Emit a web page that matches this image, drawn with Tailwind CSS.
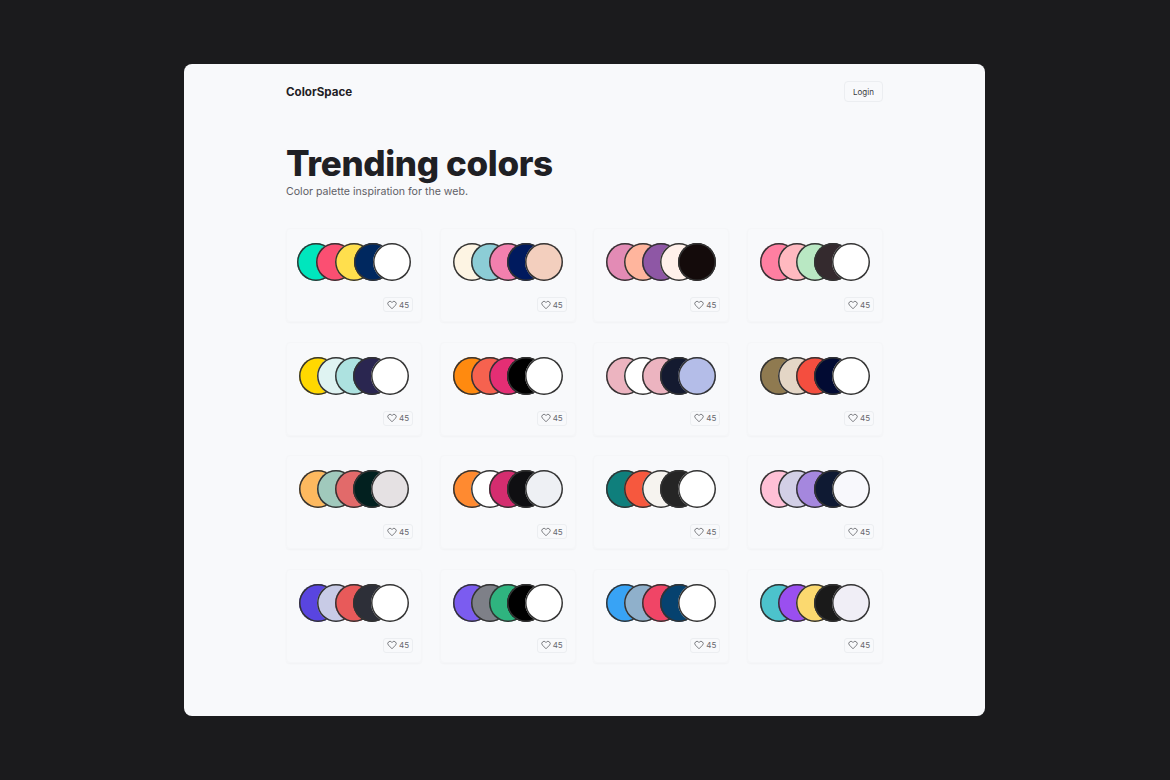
<!DOCTYPE html>
<html lang="en">
<head>
    <meta charset="UTF-8">
    <title>ColorSpace - Trending colors</title>
    <script src="https://cdn.jsdelivr.net/npm/@tailwindcss/browser@4"></script>
</head>
<body class="bg-[#1b1b1d] font-['Inter',sans-serif]">
<div class="min-h-[780px] pt-[64px] pl-[184px]">
    <div class="w-[801px] h-[652px] bg-[#f8f9fb] rounded-lg px-[102px] pt-[17px]">
        <!-- Header -->
        <header class="flex items-center justify-between">
            <span class="pt-[2px] text-[11.6px] font-bold text-[#1f2024]">ColorSpace</span>
            <button class="w-[39px] h-[21px] rounded border border-[#eceef1] text-[8px] text-[#3a3b40]">Login</button>
        </header>

        <h1 class="mt-[41px] text-[35px] leading-[40px] font-extrabold tracking-[-0.35px] text-[#1f2024]">Trending colors</h1>
        <p class="mt-[2px] text-[10.6px] leading-[14px] text-[#5f6066]">Color palette inspiration for the web.</p>

        <!-- Palettes -->
        <div class="mt-[29px] grid grid-cols-4 gap-x-[17.67px] gap-y-[19.5px]">
            <!-- Row 1 -->
            <div class="h-[94px] pt-[14px] px-[8px] rounded border border-[#f5f6f8] shadow-[0_1px_2px_rgba(0,0,0,0.03)]">
                <div class="flex justify-center">
                    <span class="shrink-0 size-[38px] rounded-full shadow-[inset_0_0_0_1.5px_#333] bg-[#00e6bd]"></span>
                    <span class="shrink-0 size-[38px] rounded-full shadow-[inset_0_0_0_1.5px_#333] bg-[#fb4f72] -ml-[19px]"></span>
                    <span class="shrink-0 size-[38px] rounded-full shadow-[inset_0_0_0_1.5px_#333] bg-[#ffdf4d] -ml-[19px]"></span>
                    <span class="shrink-0 size-[38px] rounded-full shadow-[inset_0_0_0_1.5px_#333] bg-[#00285f] -ml-[19px]"></span>
                    <span class="shrink-0 size-[38px] rounded-full shadow-[inset_0_0_0_1.5px_#333] bg-[#fff] -ml-[19px]"></span>
                </div>
                <div class="mt-[16px] flex justify-end">
                    <span class="w-[30px] h-[15px] flex items-center justify-center gap-[2px] rounded-[3px] border border-[#eceef1] text-[8px] text-[#66676d]"><svg class="size-[10px]" viewBox="0 0 24 24" fill="none" stroke="#55565b" stroke-width="1.8"><path d="M12 21 3.5 12.4a5.4 5.4 0 0 1 0-7.6 5.3 5.3 0 0 1 7.6 0l.9.9.9-.9a5.3 5.3 0 0 1 7.6 0 5.4 5.4 0 0 1 0 7.6z"/></svg>45</span>
                </div>
            </div>
            <div class="h-[94px] pt-[14px] px-[8px] rounded border border-[#f5f6f8] shadow-[0_1px_2px_rgba(0,0,0,0.03)]">
                <div class="flex justify-center">
                    <span class="shrink-0 size-[38px] rounded-full shadow-[inset_0_0_0_1.5px_#333] bg-[#fdf4e3]"></span>
                    <span class="shrink-0 size-[38px] rounded-full shadow-[inset_0_0_0_1.5px_#333] bg-[#8ccdd6] -ml-[20px]"></span>
                    <span class="shrink-0 size-[38px] rounded-full shadow-[inset_0_0_0_1.5px_#333] bg-[#f280ae] -ml-[20px]"></span>
                    <span class="shrink-0 size-[38px] rounded-full shadow-[inset_0_0_0_1.5px_#333] bg-[#001a5e] -ml-[20px]"></span>
                    <span class="shrink-0 size-[38px] rounded-full shadow-[inset_0_0_0_1.5px_#333] bg-[#f3cfbe] -ml-[20px]"></span>
                </div>
                <div class="mt-[16px] flex justify-end">
                    <span class="w-[30px] h-[15px] flex items-center justify-center gap-[2px] rounded-[3px] border border-[#eceef1] text-[8px] text-[#66676d]"><svg class="size-[10px]" viewBox="0 0 24 24" fill="none" stroke="#55565b" stroke-width="1.8"><path d="M12 21 3.5 12.4a5.4 5.4 0 0 1 0-7.6 5.3 5.3 0 0 1 7.6 0l.9.9.9-.9a5.3 5.3 0 0 1 7.6 0 5.4 5.4 0 0 1 0 7.6z"/></svg>45</span>
                </div>
            </div>
            <div class="h-[94px] pt-[14px] px-[8px] rounded border border-[#f5f6f8] shadow-[0_1px_2px_rgba(0,0,0,0.03)]">
                <div class="flex justify-center">
                    <span class="shrink-0 size-[38px] rounded-full shadow-[inset_0_0_0_1.5px_#333] bg-[#e38bb5]"></span>
                    <span class="shrink-0 size-[38px] rounded-full shadow-[inset_0_0_0_1.5px_#333] bg-[#ffb59d] -ml-[20px]"></span>
                    <span class="shrink-0 size-[38px] rounded-full shadow-[inset_0_0_0_1.5px_#333] bg-[#8e57a5] -ml-[20px]"></span>
                    <span class="shrink-0 size-[38px] rounded-full shadow-[inset_0_0_0_1.5px_#333] bg-[#fff0ea] -ml-[20px]"></span>
                    <span class="shrink-0 size-[38px] rounded-full shadow-[inset_0_0_0_1.5px_#333] bg-[#140b0b] -ml-[20px]"></span>
                </div>
                <div class="mt-[16px] flex justify-end">
                    <span class="w-[30px] h-[15px] flex items-center justify-center gap-[2px] rounded-[3px] border border-[#eceef1] text-[8px] text-[#66676d]"><svg class="size-[10px]" viewBox="0 0 24 24" fill="none" stroke="#55565b" stroke-width="1.8"><path d="M12 21 3.5 12.4a5.4 5.4 0 0 1 0-7.6 5.3 5.3 0 0 1 7.6 0l.9.9.9-.9a5.3 5.3 0 0 1 7.6 0 5.4 5.4 0 0 1 0 7.6z"/></svg>45</span>
                </div>
            </div>
            <div class="h-[94px] pt-[14px] px-[8px] rounded border border-[#f5f6f8] shadow-[0_1px_2px_rgba(0,0,0,0.03)]">
                <div class="flex justify-center">
                    <span class="shrink-0 size-[38px] rounded-full shadow-[inset_0_0_0_1.5px_#333] bg-[#ff7fa1]"></span>
                    <span class="shrink-0 size-[38px] rounded-full shadow-[inset_0_0_0_1.5px_#333] bg-[#ffb9c0] -ml-[20px]"></span>
                    <span class="shrink-0 size-[38px] rounded-full shadow-[inset_0_0_0_1.5px_#333] bg-[#b9e8c3] -ml-[20px]"></span>
                    <span class="shrink-0 size-[38px] rounded-full shadow-[inset_0_0_0_1.5px_#333] bg-[#342a2e] -ml-[20px]"></span>
                    <span class="shrink-0 size-[38px] rounded-full shadow-[inset_0_0_0_1.5px_#333] bg-[#fff] -ml-[20px]"></span>
                </div>
                <div class="mt-[16px] flex justify-end">
                    <span class="w-[30px] h-[15px] flex items-center justify-center gap-[2px] rounded-[3px] border border-[#eceef1] text-[8px] text-[#66676d]"><svg class="size-[10px]" viewBox="0 0 24 24" fill="none" stroke="#55565b" stroke-width="1.8"><path d="M12 21 3.5 12.4a5.4 5.4 0 0 1 0-7.6 5.3 5.3 0 0 1 7.6 0l.9.9.9-.9a5.3 5.3 0 0 1 7.6 0 5.4 5.4 0 0 1 0 7.6z"/></svg>45</span>
                </div>
            </div>

            <!-- Row 2 -->
            <div class="h-[94px] pt-[14px] px-[8px] rounded border border-[#f5f6f8] shadow-[0_1px_2px_rgba(0,0,0,0.03)]">
                <div class="flex justify-center">
                    <span class="shrink-0 size-[38px] rounded-full shadow-[inset_0_0_0_1.5px_#333] bg-[#ffd800]"></span>
                    <span class="shrink-0 size-[38px] rounded-full shadow-[inset_0_0_0_1.5px_#333] bg-[#dff3f2] -ml-[20px]"></span>
                    <span class="shrink-0 size-[38px] rounded-full shadow-[inset_0_0_0_1.5px_#333] bg-[#ade2e0] -ml-[20px]"></span>
                    <span class="shrink-0 size-[38px] rounded-full shadow-[inset_0_0_0_1.5px_#333] bg-[#2a2650] -ml-[20px]"></span>
                    <span class="shrink-0 size-[38px] rounded-full shadow-[inset_0_0_0_1.5px_#333] bg-[#fff] -ml-[20px]"></span>
                </div>
                <div class="mt-[16px] flex justify-end">
                    <span class="w-[30px] h-[15px] flex items-center justify-center gap-[2px] rounded-[3px] border border-[#eceef1] text-[8px] text-[#66676d]"><svg class="size-[10px]" viewBox="0 0 24 24" fill="none" stroke="#55565b" stroke-width="1.8"><path d="M12 21 3.5 12.4a5.4 5.4 0 0 1 0-7.6 5.3 5.3 0 0 1 7.6 0l.9.9.9-.9a5.3 5.3 0 0 1 7.6 0 5.4 5.4 0 0 1 0 7.6z"/></svg>45</span>
                </div>
            </div>
            <div class="h-[94px] pt-[14px] px-[8px] rounded border border-[#f5f6f8] shadow-[0_1px_2px_rgba(0,0,0,0.03)]">
                <div class="flex justify-center">
                    <span class="shrink-0 size-[38px] rounded-full shadow-[inset_0_0_0_1.5px_#333] bg-[#ff8a0f]"></span>
                    <span class="shrink-0 size-[38px] rounded-full shadow-[inset_0_0_0_1.5px_#333] bg-[#f6624f] -ml-[20px]"></span>
                    <span class="shrink-0 size-[38px] rounded-full shadow-[inset_0_0_0_1.5px_#333] bg-[#e42e74] -ml-[20px]"></span>
                    <span class="shrink-0 size-[38px] rounded-full shadow-[inset_0_0_0_1.5px_#333] bg-[#000] -ml-[20px]"></span>
                    <span class="shrink-0 size-[38px] rounded-full shadow-[inset_0_0_0_1.5px_#333] bg-[#fff] -ml-[20px]"></span>
                </div>
                <div class="mt-[16px] flex justify-end">
                    <span class="w-[30px] h-[15px] flex items-center justify-center gap-[2px] rounded-[3px] border border-[#eceef1] text-[8px] text-[#66676d]"><svg class="size-[10px]" viewBox="0 0 24 24" fill="none" stroke="#55565b" stroke-width="1.8"><path d="M12 21 3.5 12.4a5.4 5.4 0 0 1 0-7.6 5.3 5.3 0 0 1 7.6 0l.9.9.9-.9a5.3 5.3 0 0 1 7.6 0 5.4 5.4 0 0 1 0 7.6z"/></svg>45</span>
                </div>
            </div>
            <div class="h-[94px] pt-[14px] px-[8px] rounded border border-[#f5f6f8] shadow-[0_1px_2px_rgba(0,0,0,0.03)]">
                <div class="flex justify-center">
                    <span class="shrink-0 size-[38px] rounded-full shadow-[inset_0_0_0_1.5px_#333] bg-[#ecb4c0]"></span>
                    <span class="shrink-0 size-[38px] rounded-full shadow-[inset_0_0_0_1.5px_#333] bg-[#fff] -ml-[20px]"></span>
                    <span class="shrink-0 size-[38px] rounded-full shadow-[inset_0_0_0_1.5px_#333] bg-[#ecb4c0] -ml-[20px]"></span>
                    <span class="shrink-0 size-[38px] rounded-full shadow-[inset_0_0_0_1.5px_#333] bg-[#141a30] -ml-[20px]"></span>
                    <span class="shrink-0 size-[38px] rounded-full shadow-[inset_0_0_0_1.5px_#333] bg-[#b4bde8] -ml-[20px]"></span>
                </div>
                <div class="mt-[16px] flex justify-end">
                    <span class="w-[30px] h-[15px] flex items-center justify-center gap-[2px] rounded-[3px] border border-[#eceef1] text-[8px] text-[#66676d]"><svg class="size-[10px]" viewBox="0 0 24 24" fill="none" stroke="#55565b" stroke-width="1.8"><path d="M12 21 3.5 12.4a5.4 5.4 0 0 1 0-7.6 5.3 5.3 0 0 1 7.6 0l.9.9.9-.9a5.3 5.3 0 0 1 7.6 0 5.4 5.4 0 0 1 0 7.6z"/></svg>45</span>
                </div>
            </div>
            <div class="h-[94px] pt-[14px] px-[8px] rounded border border-[#f5f6f8] shadow-[0_1px_2px_rgba(0,0,0,0.03)]">
                <div class="flex justify-center">
                    <span class="shrink-0 size-[38px] rounded-full shadow-[inset_0_0_0_1.5px_#333] bg-[#8f7a50]"></span>
                    <span class="shrink-0 size-[38px] rounded-full shadow-[inset_0_0_0_1.5px_#333] bg-[#e4d6c6] -ml-[20px]"></span>
                    <span class="shrink-0 size-[38px] rounded-full shadow-[inset_0_0_0_1.5px_#333] bg-[#f44e3f] -ml-[20px]"></span>
                    <span class="shrink-0 size-[38px] rounded-full shadow-[inset_0_0_0_1.5px_#333] bg-[#020b33] -ml-[20px]"></span>
                    <span class="shrink-0 size-[38px] rounded-full shadow-[inset_0_0_0_1.5px_#333] bg-[#fff] -ml-[20px]"></span>
                </div>
                <div class="mt-[16px] flex justify-end">
                    <span class="w-[30px] h-[15px] flex items-center justify-center gap-[2px] rounded-[3px] border border-[#eceef1] text-[8px] text-[#66676d]"><svg class="size-[10px]" viewBox="0 0 24 24" fill="none" stroke="#55565b" stroke-width="1.8"><path d="M12 21 3.5 12.4a5.4 5.4 0 0 1 0-7.6 5.3 5.3 0 0 1 7.6 0l.9.9.9-.9a5.3 5.3 0 0 1 7.6 0 5.4 5.4 0 0 1 0 7.6z"/></svg>45</span>
                </div>
            </div>

            <!-- Row 3 -->
            <div class="h-[94px] pt-[14px] px-[8px] rounded border border-[#f5f6f8] shadow-[0_1px_2px_rgba(0,0,0,0.03)]">
                <div class="flex justify-center">
                    <span class="shrink-0 size-[38px] rounded-full shadow-[inset_0_0_0_1.5px_#333] bg-[#fdb95f]"></span>
                    <span class="shrink-0 size-[38px] rounded-full shadow-[inset_0_0_0_1.5px_#333] bg-[#a0c9bc] -ml-[20px]"></span>
                    <span class="shrink-0 size-[38px] rounded-full shadow-[inset_0_0_0_1.5px_#333] bg-[#e26a6a] -ml-[20px]"></span>
                    <span class="shrink-0 size-[38px] rounded-full shadow-[inset_0_0_0_1.5px_#333] bg-[#02201f] -ml-[20px]"></span>
                    <span class="shrink-0 size-[38px] rounded-full shadow-[inset_0_0_0_1.5px_#333] bg-[#e5e1e3] -ml-[20px]"></span>
                </div>
                <div class="mt-[16px] flex justify-end">
                    <span class="w-[30px] h-[15px] flex items-center justify-center gap-[2px] rounded-[3px] border border-[#eceef1] text-[8px] text-[#66676d]"><svg class="size-[10px]" viewBox="0 0 24 24" fill="none" stroke="#55565b" stroke-width="1.8"><path d="M12 21 3.5 12.4a5.4 5.4 0 0 1 0-7.6 5.3 5.3 0 0 1 7.6 0l.9.9.9-.9a5.3 5.3 0 0 1 7.6 0 5.4 5.4 0 0 1 0 7.6z"/></svg>45</span>
                </div>
            </div>
            <div class="h-[94px] pt-[14px] px-[8px] rounded border border-[#f5f6f8] shadow-[0_1px_2px_rgba(0,0,0,0.03)]">
                <div class="flex justify-center">
                    <span class="shrink-0 size-[38px] rounded-full shadow-[inset_0_0_0_1.5px_#333] bg-[#ff8a30]"></span>
                    <span class="shrink-0 size-[38px] rounded-full shadow-[inset_0_0_0_1.5px_#333] bg-[#fff] -ml-[20px]"></span>
                    <span class="shrink-0 size-[38px] rounded-full shadow-[inset_0_0_0_1.5px_#333] bg-[#d42d6f] -ml-[20px]"></span>
                    <span class="shrink-0 size-[38px] rounded-full shadow-[inset_0_0_0_1.5px_#333] bg-[#0f0f12] -ml-[20px]"></span>
                    <span class="shrink-0 size-[38px] rounded-full shadow-[inset_0_0_0_1.5px_#333] bg-[#eef0f4] -ml-[20px]"></span>
                </div>
                <div class="mt-[16px] flex justify-end">
                    <span class="w-[30px] h-[15px] flex items-center justify-center gap-[2px] rounded-[3px] border border-[#eceef1] text-[8px] text-[#66676d]"><svg class="size-[10px]" viewBox="0 0 24 24" fill="none" stroke="#55565b" stroke-width="1.8"><path d="M12 21 3.5 12.4a5.4 5.4 0 0 1 0-7.6 5.3 5.3 0 0 1 7.6 0l.9.9.9-.9a5.3 5.3 0 0 1 7.6 0 5.4 5.4 0 0 1 0 7.6z"/></svg>45</span>
                </div>
            </div>
            <div class="h-[94px] pt-[14px] px-[8px] rounded border border-[#f5f6f8] shadow-[0_1px_2px_rgba(0,0,0,0.03)]">
                <div class="flex justify-center">
                    <span class="shrink-0 size-[38px] rounded-full shadow-[inset_0_0_0_1.5px_#333] bg-[#0f7f7c]"></span>
                    <span class="shrink-0 size-[38px] rounded-full shadow-[inset_0_0_0_1.5px_#333] bg-[#f6583e] -ml-[20px]"></span>
                    <span class="shrink-0 size-[38px] rounded-full shadow-[inset_0_0_0_1.5px_#333] bg-[#f6f3ef] -ml-[20px]"></span>
                    <span class="shrink-0 size-[38px] rounded-full shadow-[inset_0_0_0_1.5px_#333] bg-[#252525] -ml-[20px]"></span>
                    <span class="shrink-0 size-[38px] rounded-full shadow-[inset_0_0_0_1.5px_#333] bg-[#fff] -ml-[20px]"></span>
                </div>
                <div class="mt-[16px] flex justify-end">
                    <span class="w-[30px] h-[15px] flex items-center justify-center gap-[2px] rounded-[3px] border border-[#eceef1] text-[8px] text-[#66676d]"><svg class="size-[10px]" viewBox="0 0 24 24" fill="none" stroke="#55565b" stroke-width="1.8"><path d="M12 21 3.5 12.4a5.4 5.4 0 0 1 0-7.6 5.3 5.3 0 0 1 7.6 0l.9.9.9-.9a5.3 5.3 0 0 1 7.6 0 5.4 5.4 0 0 1 0 7.6z"/></svg>45</span>
                </div>
            </div>
            <div class="h-[94px] pt-[14px] px-[8px] rounded border border-[#f5f6f8] shadow-[0_1px_2px_rgba(0,0,0,0.03)]">
                <div class="flex justify-center">
                    <span class="shrink-0 size-[38px] rounded-full shadow-[inset_0_0_0_1.5px_#333] bg-[#ffc0d6]"></span>
                    <span class="shrink-0 size-[38px] rounded-full shadow-[inset_0_0_0_1.5px_#333] bg-[#d2cfe6] -ml-[20px]"></span>
                    <span class="shrink-0 size-[38px] rounded-full shadow-[inset_0_0_0_1.5px_#333] bg-[#a587de] -ml-[20px]"></span>
                    <span class="shrink-0 size-[38px] rounded-full shadow-[inset_0_0_0_1.5px_#333] bg-[#0f1a33] -ml-[20px]"></span>
                    <span class="shrink-0 size-[38px] rounded-full shadow-[inset_0_0_0_1.5px_#333] bg-[#f8f8fc] -ml-[20px]"></span>
                </div>
                <div class="mt-[16px] flex justify-end">
                    <span class="w-[30px] h-[15px] flex items-center justify-center gap-[2px] rounded-[3px] border border-[#eceef1] text-[8px] text-[#66676d]"><svg class="size-[10px]" viewBox="0 0 24 24" fill="none" stroke="#55565b" stroke-width="1.8"><path d="M12 21 3.5 12.4a5.4 5.4 0 0 1 0-7.6 5.3 5.3 0 0 1 7.6 0l.9.9.9-.9a5.3 5.3 0 0 1 7.6 0 5.4 5.4 0 0 1 0 7.6z"/></svg>45</span>
                </div>
            </div>

            <!-- Row 4 -->
            <div class="h-[94px] pt-[14px] px-[8px] rounded border border-[#f5f6f8] shadow-[0_1px_2px_rgba(0,0,0,0.03)]">
                <div class="flex justify-center">
                    <span class="shrink-0 size-[38px] rounded-full shadow-[inset_0_0_0_1.5px_#333] bg-[#5945e0]"></span>
                    <span class="shrink-0 size-[38px] rounded-full shadow-[inset_0_0_0_1.5px_#333] bg-[#c8cbe6] -ml-[20px]"></span>
                    <span class="shrink-0 size-[38px] rounded-full shadow-[inset_0_0_0_1.5px_#333] bg-[#e85a5a] -ml-[20px]"></span>
                    <span class="shrink-0 size-[38px] rounded-full shadow-[inset_0_0_0_1.5px_#333] bg-[#2d2f38] -ml-[20px]"></span>
                    <span class="shrink-0 size-[38px] rounded-full shadow-[inset_0_0_0_1.5px_#333] bg-[#fff] -ml-[20px]"></span>
                </div>
                <div class="mt-[16px] flex justify-end">
                    <span class="w-[30px] h-[15px] flex items-center justify-center gap-[2px] rounded-[3px] border border-[#eceef1] text-[8px] text-[#66676d]"><svg class="size-[10px]" viewBox="0 0 24 24" fill="none" stroke="#55565b" stroke-width="1.8"><path d="M12 21 3.5 12.4a5.4 5.4 0 0 1 0-7.6 5.3 5.3 0 0 1 7.6 0l.9.9.9-.9a5.3 5.3 0 0 1 7.6 0 5.4 5.4 0 0 1 0 7.6z"/></svg>45</span>
                </div>
            </div>
            <div class="h-[94px] pt-[14px] px-[8px] rounded border border-[#f5f6f8] shadow-[0_1px_2px_rgba(0,0,0,0.03)]">
                <div class="flex justify-center">
                    <span class="shrink-0 size-[38px] rounded-full shadow-[inset_0_0_0_1.5px_#333] bg-[#7b5cf0]"></span>
                    <span class="shrink-0 size-[38px] rounded-full shadow-[inset_0_0_0_1.5px_#333] bg-[#7e8088] -ml-[20px]"></span>
                    <span class="shrink-0 size-[38px] rounded-full shadow-[inset_0_0_0_1.5px_#333] bg-[#2fb47f] -ml-[20px]"></span>
                    <span class="shrink-0 size-[38px] rounded-full shadow-[inset_0_0_0_1.5px_#333] bg-[#000] -ml-[20px]"></span>
                    <span class="shrink-0 size-[38px] rounded-full shadow-[inset_0_0_0_1.5px_#333] bg-[#fff] -ml-[20px]"></span>
                </div>
                <div class="mt-[16px] flex justify-end">
                    <span class="w-[30px] h-[15px] flex items-center justify-center gap-[2px] rounded-[3px] border border-[#eceef1] text-[8px] text-[#66676d]"><svg class="size-[10px]" viewBox="0 0 24 24" fill="none" stroke="#55565b" stroke-width="1.8"><path d="M12 21 3.5 12.4a5.4 5.4 0 0 1 0-7.6 5.3 5.3 0 0 1 7.6 0l.9.9.9-.9a5.3 5.3 0 0 1 7.6 0 5.4 5.4 0 0 1 0 7.6z"/></svg>45</span>
                </div>
            </div>
            <div class="h-[94px] pt-[14px] px-[8px] rounded border border-[#f5f6f8] shadow-[0_1px_2px_rgba(0,0,0,0.03)]">
                <div class="flex justify-center">
                    <span class="shrink-0 size-[38px] rounded-full shadow-[inset_0_0_0_1.5px_#333] bg-[#38a3f5]"></span>
                    <span class="shrink-0 size-[38px] rounded-full shadow-[inset_0_0_0_1.5px_#333] bg-[#8fb0cb] -ml-[20px]"></span>
                    <span class="shrink-0 size-[38px] rounded-full shadow-[inset_0_0_0_1.5px_#333] bg-[#f04566] -ml-[20px]"></span>
                    <span class="shrink-0 size-[38px] rounded-full shadow-[inset_0_0_0_1.5px_#333] bg-[#06426f] -ml-[20px]"></span>
                    <span class="shrink-0 size-[38px] rounded-full shadow-[inset_0_0_0_1.5px_#333] bg-[#fff] -ml-[20px]"></span>
                </div>
                <div class="mt-[16px] flex justify-end">
                    <span class="w-[30px] h-[15px] flex items-center justify-center gap-[2px] rounded-[3px] border border-[#eceef1] text-[8px] text-[#66676d]"><svg class="size-[10px]" viewBox="0 0 24 24" fill="none" stroke="#55565b" stroke-width="1.8"><path d="M12 21 3.5 12.4a5.4 5.4 0 0 1 0-7.6 5.3 5.3 0 0 1 7.6 0l.9.9.9-.9a5.3 5.3 0 0 1 7.6 0 5.4 5.4 0 0 1 0 7.6z"/></svg>45</span>
                </div>
            </div>
            <div class="h-[94px] pt-[14px] px-[8px] rounded border border-[#f5f6f8] shadow-[0_1px_2px_rgba(0,0,0,0.03)]">
                <div class="flex justify-center">
                    <span class="shrink-0 size-[38px] rounded-full shadow-[inset_0_0_0_1.5px_#333] bg-[#4cc3cc]"></span>
                    <span class="shrink-0 size-[38px] rounded-full shadow-[inset_0_0_0_1.5px_#333] bg-[#9a4ff0] -ml-[20px]"></span>
                    <span class="shrink-0 size-[38px] rounded-full shadow-[inset_0_0_0_1.5px_#333] bg-[#fbd96f] -ml-[20px]"></span>
                    <span class="shrink-0 size-[38px] rounded-full shadow-[inset_0_0_0_1.5px_#333] bg-[#1a1a1a] -ml-[20px]"></span>
                    <span class="shrink-0 size-[38px] rounded-full shadow-[inset_0_0_0_1.5px_#333] bg-[#f0eef6] -ml-[20px]"></span>
                </div>
                <div class="mt-[16px] flex justify-end">
                    <span class="w-[30px] h-[15px] flex items-center justify-center gap-[2px] rounded-[3px] border border-[#eceef1] text-[8px] text-[#66676d]"><svg class="size-[10px]" viewBox="0 0 24 24" fill="none" stroke="#55565b" stroke-width="1.8"><path d="M12 21 3.5 12.4a5.4 5.4 0 0 1 0-7.6 5.3 5.3 0 0 1 7.6 0l.9.9.9-.9a5.3 5.3 0 0 1 7.6 0 5.4 5.4 0 0 1 0 7.6z"/></svg>45</span>
                </div>
            </div>
        </div>
    </div>
</div>
</body>
</html>
